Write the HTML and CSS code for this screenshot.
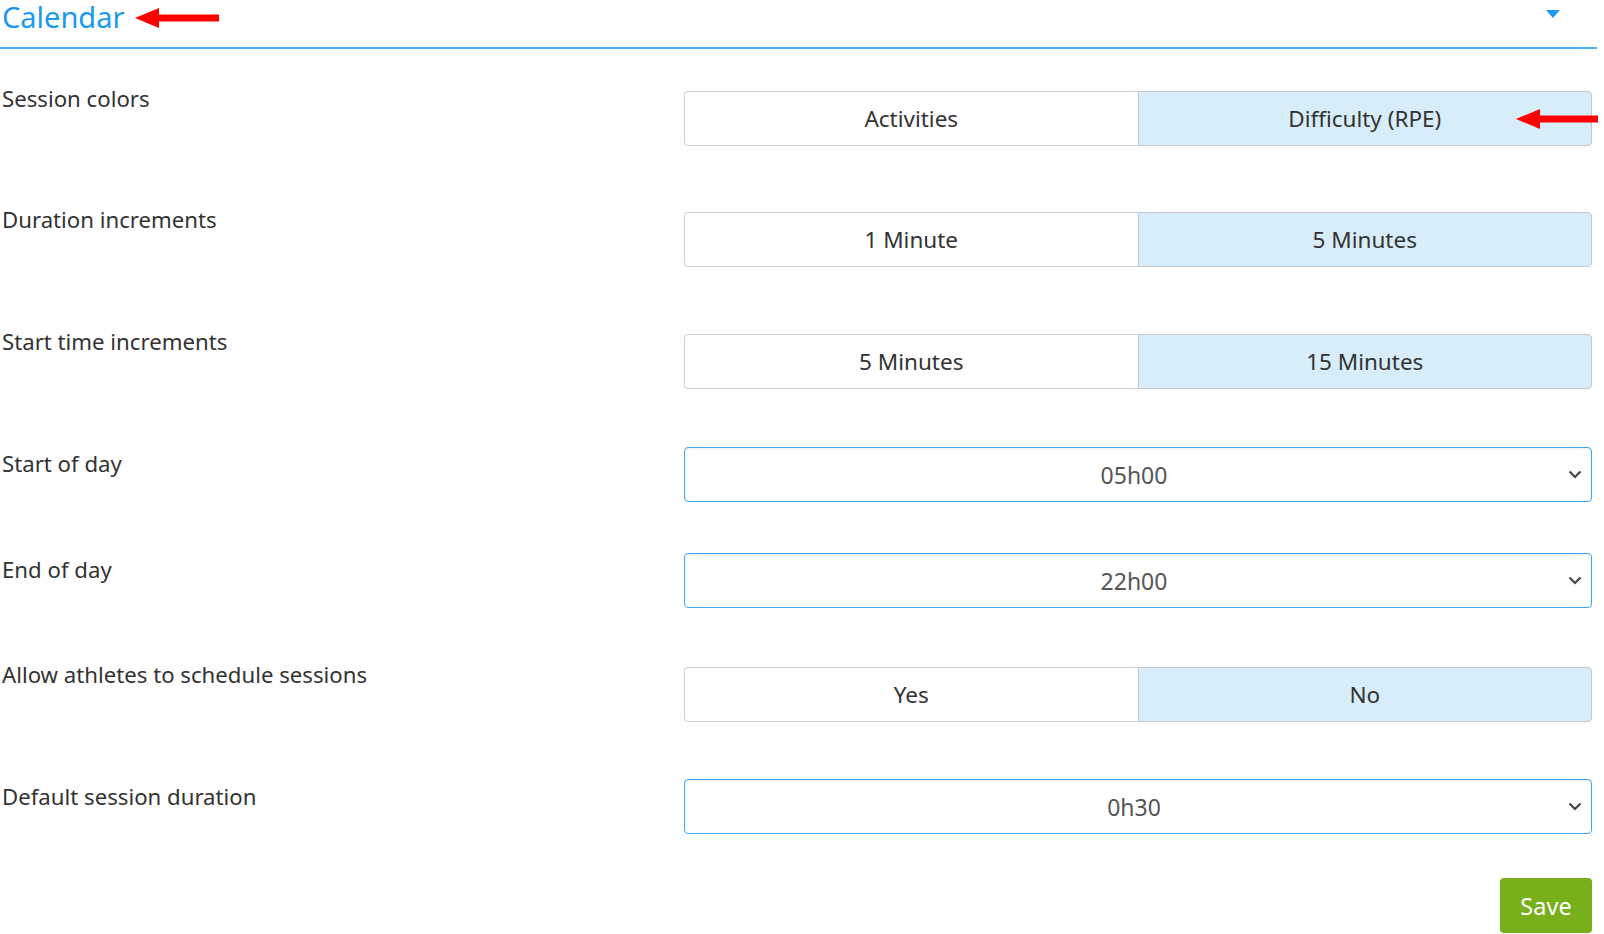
FILE: index.html
```html
<!DOCTYPE html>
<html>
<head>
<meta charset="utf-8">
<link rel="stylesheet" href="styles.css">
</head>
<body>
<div class="page">
  <div class="header">
    <div class="title-wrap">
      <span class="title">Calendar</span>
      <svg class="arrow arrow-title" width="84" height="22" viewBox="0 0 84 22"><polygon points="0,11 24,1 24,7.5 84,7.5 84,14.5 24,14.5 24,21" fill="#f00"/></svg>
    </div>
    <svg class="caret" width="14" height="9" viewBox="0 0 14 9"><polygon points="0,0 14,0 7,8" fill="#1a9aef"/></svg>
  </div>

  <div class="row btn-row gap61">
    <div class="label">Session colors</div>
    <div class="group">
      <div class="opt">Activities</div>
      <div class="opt on">Difficulty (RPE)</div>
      <svg class="arrow arrow-right" width="82" height="22" viewBox="0 0 82 22"><polygon points="0,11 24,1 24,7.5 82,7.5 82,14.5 24,14.5 24,21" fill="#f00"/></svg>
    </div>
  </div>

  <div class="row btn-row gap62">
    <div class="label">Duration increments</div>
    <div class="group">
      <div class="opt">1 Minute</div>
      <div class="opt on">5 Minutes</div>
    </div>
  </div>

  <div class="row btn-row gap58">
    <div class="label">Start time increments</div>
    <div class="group">
      <div class="opt">5 Minutes</div>
      <div class="opt on">15 Minutes</div>
    </div>
  </div>

  <div class="row sel-row gap51">
    <div class="label">Start of day</div>
    <div class="select"><span>05h00</span><svg class="chev" width="14" height="9" viewBox="0 0 14 9"><polyline points="1.5,1.5 7,7 12.5,1.5" fill="none" stroke="#444" stroke-width="2.2"/></svg></div>
  </div>

  <div class="row sel-row gap54">
    <div class="label">End of day</div>
    <div class="select"><span>22h00</span><svg class="chev" width="14" height="9" viewBox="0 0 14 9"><polyline points="1.5,1.5 7,7 12.5,1.5" fill="none" stroke="#444" stroke-width="2.2"/></svg></div>
  </div>

  <div class="row btn-row gap57">
    <div class="label">Allow athletes to schedule sessions</div>
    <div class="group">
      <div class="opt">Yes</div>
      <div class="opt on">No</div>
    </div>
  </div>

  <div class="row sel-row gap44 last-sel">
    <div class="label">Default session duration</div>
    <div class="select"><span>0h30</span><svg class="chev" width="14" height="9" viewBox="0 0 14 9"><polyline points="1.5,1.5 7,7 12.5,1.5" fill="none" stroke="#444" stroke-width="2.2"/></svg></div>
  </div>

  <div class="actions">
    <button class="save">Save</button>
  </div>
</div>
</body>
</html>
```

FILE: styles.css
```css
html, body {
  margin: 0;
  padding: 0;
  background: #fff;
}
body {
  font-family: "Noto Sans", "Open Sans", sans-serif;
  color: #333;
  overflow: hidden;
}
.page {
  width: 1597px;
  position: relative;
}
.header {
  height: 47px;
  border-bottom: 2px solid #4aaef2;
  display: flex;
  align-items: flex-start;
  justify-content: space-between;
}
.title-wrap {
  display: flex;
  align-items: center;
  height: 34px;
}
.title {
  font-size: 29px;
  color: #1a9aef;
  line-height: 34px;
  padding-left: 2px;
}
.arrow-title {
  margin-left: 11px;
  margin-top: 2px;
}
.caret {
  margin-top: 10px;
  margin-right: 37px;
}
.header + .row { margin-top: 37px; }
.row {
  display: flex;
  align-items: flex-start;
}
.row.btn-row .group { margin-top: 5px; }
.row.sel-row .label { margin-top: 4px; }
.row.last-sel .label { margin-top: 5px; }
.gap61 { margin-bottom: 61px; }
.gap62 { margin-bottom: 62px; }
.gap58 { margin-bottom: 58px; }
.gap57 { margin-bottom: 57px; }
.gap54 { margin-bottom: 54px; }
.gap51 { margin-bottom: 51px; }
.gap44 { margin-bottom: 44px; }
.label {
  width: 684px;
  flex: none;
  font-size: 22.2px;
  line-height: 26px;
  padding-left: 2px;
  box-sizing: border-box;
}
.group {
  width: 908px;
  height: 55px;
  display: flex;
  position: relative;
}
.opt {
  flex: 1;
  display: flex;
  align-items: center;
  justify-content: center;
  font-size: 22.5px;
  border: 1px solid #cfcfcf;
  background: #fff;
  color: #333;
}
.opt:first-child {
  border-radius: 4px 0 0 4px;
  border-right: none;
}
.opt.on {
  background: #d7edfa;
  border-color: #c4c8cc;
  border-radius: 0 4px 4px 0;
}
.arrow-right {
  position: absolute;
  right: -6px;
  top: 17px;
}
.select {
  width: 908px;
  height: 55px;
  box-sizing: border-box;
  padding-right: 8px;
  border: 1.5px solid #3ea8f2;
  border-radius: 4px;
  box-shadow: inset 0 1px 2px rgba(0,0,0,0.08);
  display: flex;
  align-items: center;
  justify-content: center;
  position: relative;
  font-size: 23px;
  color: #555;
}
.chev {
  position: absolute;
  right: 9px;
  top: 22px;
}
.actions {
  display: flex;
  justify-content: flex-end;
  padding-right: 5px;
}
.save {
  width: 92px;
  height: 55px;
  background: #77b01a;
  border: none;
  border-radius: 4px;
  color: #fff;
  font-family: "Noto Sans", "Open Sans", sans-serif;
  font-size: 23.5px;
  padding: 0;
}
```
